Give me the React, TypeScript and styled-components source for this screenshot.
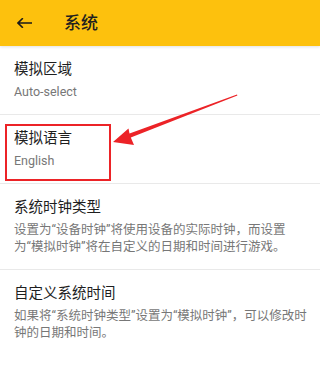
import React from "react";
import styled, { createGlobalStyle } from "styled-components";

const Global = createGlobalStyle`
  html, body { margin: 0; padding: 0; background: #fff; }
  body { font-family: Roboto, "Noto Sans CJK SC", sans-serif; }
  * { box-sizing: border-box; }
`;

const Page = styled.div`
  position: relative;
  width: 320px;
  height: 367px;
  overflow: hidden;
  background: #fff;
  display: flex;
  flex-direction: column;
`;

const Toolbar = styled.header`
  height: 46px;
  flex: none;
  background: #fdc10d;
  display: flex;
  align-items: center;
  padding-left: 17px;
  box-shadow: 0 1px 3px rgba(0, 0, 0, 0.12);
  position: relative;
  z-index: 1;
`;

const BackButton = styled.span`
  display: flex;
  width: 15px;
  height: 10px;
`;

const ToolbarTitle = styled.h1`
  margin: 0 0 0 32px;
  font-size: 17px;
  line-height: 22px;
  font-weight: 500;
  color: #1f1f1f;
`;

const List = styled.div`
  display: flex;
  flex-direction: column;
`;

const Item = styled.div`
  display: flex;
  flex-direction: column;
  gap: 3px;
  padding: 14px 12px 14px 14px;
  border-bottom: 1px solid #e9e9e9;
  &:last-child { border-bottom: none; }
`;

const Title = styled.div`
  font-size: 14.5px;
  line-height: 20px;
  color: #1e1e1e;
`;

const Summary = styled.div`
  font-size: 12.5px;
  line-height: 17px;
  color: #777;
`;

const Highlight = styled.div`
  position: absolute;
  left: 5px;
  top: 124px;
  width: 106px;
  height: 57px;
  border: 2px solid #ec2327;
  pointer-events: none;
`;

const Pointer = styled.svg`
  position: absolute;
  left: 0;
  top: 0;
  width: 320px;
  height: 367px;
  pointer-events: none;
`;

const items = [
  { title: "模拟区域", summary: "Auto-select" },
  { title: "模拟语言", summary: "English" },
  {
    title: "系统时钟类型",
    summary: "设置为“设备时钟”将使用设备的实际时钟，而设置为“模拟时钟”将在自定义的日期和时间进行游戏。",
  },
  {
    title: "自定义系统时间",
    summary: "如果将“系统时钟类型”设置为“模拟时钟”，可以修改时钟的日期和时间。",
  },
];

export default function App() {
  return (
    <>
      <Global />
      <Page>
        <Toolbar>
          <BackButton>
            <svg width="15" height="10" viewBox="0 0 15 10" fill="none">
              <path
                d="M14.5 5H1.2M5.3 0.8L1 5l4.3 4.2"
                stroke="#1a1a1a"
                strokeWidth="1.6"
                strokeLinecap="square"
              />
            </svg>
          </BackButton>
          <ToolbarTitle>系统</ToolbarTitle>
        </Toolbar>
        <List>
          {items.map((it) => (
            <Item key={it.title}>
              <Title>{it.title}</Title>
              <Summary>{it.summary}</Summary>
            </Item>
          ))}
        </List>
        <Highlight />
        <Pointer viewBox="0 0 320 367">
          <polygon
            points="113,142 128.5,128.5 129.5,133.6 237,94.4 237.4,95.6 130.8,137.6 134,145"
            fill="#ec2327"
          />
        </Pointer>
      </Page>
    </>
  );
}
